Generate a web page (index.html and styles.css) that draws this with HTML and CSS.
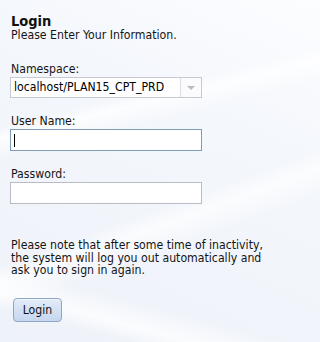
FILE: index.html
```html
<!DOCTYPE html>
<html>
<head>
<meta charset="utf-8">
<title>Login</title>
<link rel="stylesheet" href="styles.css">
</head>
<body>
<main class="page">
  <h1 class="title">Login</h1>
  <p class="subtitle">Please Enter Your Information.</p>

  <label class="label label-first">Namespace:</label>
  <div class="combo">
    <span class="combo-text">localhost/PLAN15_CPT_PRD</span>
    <span class="combo-btn"><span class="arrow"></span></span>
  </div>

  <label class="label">User Name:</label>
  <div class="field">
    <input class="input input-focus" type="text">
    <span class="caret"></span>
  </div>

  <label class="label">Password:</label>
  <div class="field">
    <input class="input" type="password">
  </div>

  <p class="notice">Please note that after some time of inactivity, the system will log you out automatically and ask you to sign in again.</p>

  <button class="btn" type="button">Login</button>
</main>
</body>
</html>
```
FILE: styles.css
```css
html, body {
  margin: 0;
  padding: 0;
  height: 100%;
}
body {
  background-color: #eff3fa;
  background-image:
    linear-gradient(166deg, rgba(255,255,255,0) 0%, rgba(255,255,255,0) 30%, rgba(255,255,255,0.8) 33%, rgba(255,255,255,0) 38%),
    linear-gradient(160deg, rgba(255,255,255,0) 0%, rgba(255,255,255,0) 58%, rgba(255,255,255,0.7) 62%, rgba(255,255,255,0) 68%),
    linear-gradient(15deg, rgba(255,255,255,0) 0%, rgba(255,255,255,0) 8%, rgba(255,255,255,0.75) 12%, rgba(255,255,255,0) 18%),
    linear-gradient(205deg, #fcfdff 0%, #f4f7fc 35%, #eef2f9 100%);
  font-family: "DejaVu Sans Condensed", "DejaVu Sans", sans-serif;
  font-size: 12.2px;
  color: #141414;
}
.page {
  padding: 14px 0 0 11px;
  display: flex;
  flex-direction: column;
  align-items: flex-start;
}
.title {
  margin: 0;
  font-size: 14.5px;
  line-height: 15px;
  font-weight: bold;
  color: #111;
}
.subtitle {
  margin: 0;
  line-height: 13px;
}
.label {
  display: block;
  line-height: 13px;
  margin: 17px 0 1px;
}
.label-first {
  margin-top: 21px;
}
.combo {
  margin-left: -1px;
  width: 190px;
  height: 19px;
  border: 1px solid #c6c9cf;
  background: #fff;
  display: flex;
  align-items: stretch;
}
.combo-text {
  flex: 1;
  padding-left: 3px;
  line-height: 19px;
  color: #000;
  white-space: nowrap;
  overflow: hidden;
}
.combo-btn {
  width: 20px;
  border-left: 1px solid #dcdee3;
  display: flex;
  align-items: center;
  justify-content: center;
  background: #fbfbfd;
}
.arrow {
  width: 0;
  height: 0;
  border-left: 4px solid transparent;
  border-right: 4px solid transparent;
  border-top: 4px solid #b5bcc8;
}
.field {
  position: relative;
  margin-left: -1px;
}
.input {
  display: block;
  box-sizing: border-box;
  width: 192px;
  height: 22px;
  margin: 0;
  padding: 0 3px;
  border: 1px solid #b9bcc2;
  background: #fff;
  font: inherit;
  outline: none;
}
.input-focus {
  border-color: #7f9db9;
}
.caret {
  position: absolute;
  left: 4px;
  top: 5px;
  width: 1px;
  height: 13px;
  background: #000;
}
.notice {
  margin: 35px 0 0;
  width: 262px;
  line-height: 12.6px;
}
.btn {
  margin: 21px 0 0 2px;
  width: 49px;
  height: 24px;
  padding: 0;
  border: 1px solid #8fa5c4;
  border-radius: 4px;
  background: linear-gradient(#e3ecf9, #d2e0f3 55%, #c6d7ee);
  box-shadow: inset 0 1px 0 #f2f7fe;
  font: inherit;
  color: #111;
}
```
